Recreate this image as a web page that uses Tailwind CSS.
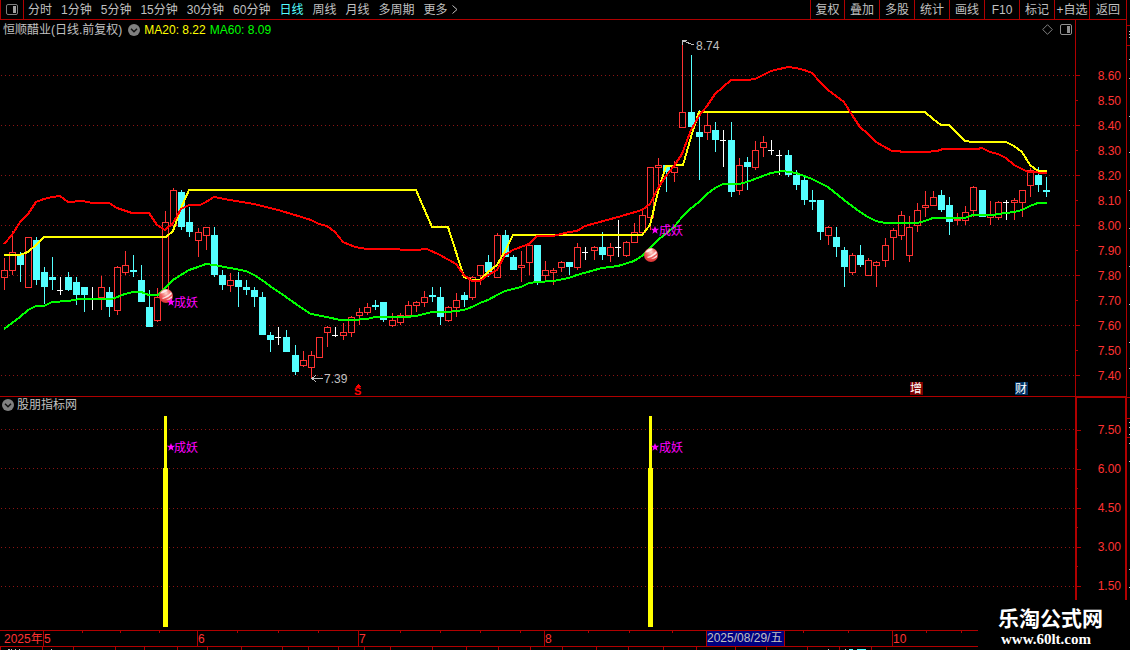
<!DOCTYPE html>
<html lang="zh-CN">
<head>
    <meta charset="UTF-8">
    <meta name="viewport" content="width=device-width, initial-scale=1.0">
    <title>恒顺醋业 日线</title>
    <script src="https://cdn.jsdelivr.net/npm/@tailwindcss/browser@4"></script>
    <style>
        body { font-family: "Liberation Sans", "Noto Sans CJK SC", sans-serif; }
    </style>
</head>
<body class="bg-black text-[#c0c0c0] text-[12px] leading-4 min-h-screen overflow-hidden relative">
    <!-- Toolbar -->
    <header class="flex h-5 border-b border-l border-[#b00000] mr-[3px]">
        <button class="w-[23px] border-r border-[#b00000] flex items-center justify-center" aria-label="面板">
            <svg class="w-[12px] h-[11px] -mt-px" viewBox="0 0 12 11" fill="none"><rect x=".5" y=".5" width="11" height="10" rx="1.5" stroke="#808080"/><rect x="7" y="2" width="3" height="7" fill="#a0a0a0"/></svg>
        </button>
        <nav class="flex gap-[9px] pl-1 whitespace-nowrap">
            <button>分时</button>
            <button>1分钟</button>
            <button>5分钟</button>
            <button>15分钟</button>
            <button>30分钟</button>
            <button>60分钟</button>
            <button class="text-[#54ffff]">日线</button>
            <button>周线</button>
            <button>月线</button>
            <button>多周期</button>
            <button class="flex items-center gap-1">更多<svg class="w-[6px] h-[9px]" viewBox="0 0 6 9" fill="none" stroke="#c0c0c0"><path d="M.5 .5l4.5 4-4.5 4"/></svg></button>
        </nav>
        <div class="ml-auto flex whitespace-nowrap">
            <button class="w-[34px] border-l border-[#b00000]">复权</button>
            <button class="w-[35px] border-l border-[#b00000]">叠加</button>
            <button class="w-[35px] border-l border-[#b00000]">多股</button>
            <button class="w-[35px] border-l border-[#b00000]">统计</button>
            <button class="w-[35px] border-l border-[#b00000]">画线</button>
            <button class="w-[35px] border-l border-[#b00000]">F10</button>
            <button class="w-[35px] border-l border-[#b00000]">标记</button>
            <button class="w-[35px] border-l border-[#b00000]">+自选</button>
            <button class="w-[38px] border-l border-r border-[#b00000]">返回</button>
        </div>
    </header>

    <div class="grid grid-cols-[minmax(0,1fr)_51px_4px]">
        <!-- Candles -->
        <section class="border-b border-[#b00000]">
            <div class="flex items-center h-[19px] pl-[3px] pr-[3px] whitespace-nowrap">
                <h1>恒顺醋业(日线.前复权)</h1>
                <button class="ml-[6px]" aria-label="指标菜单">
                    <svg class="w-3 h-3 block" viewBox="0 0 12 12" fill="none"><circle cx="6" cy="6" r="6" fill="#808080"/><path d="M3 4.8l3 3 3-3" stroke="#111" stroke-width="1.5"/></svg>
                </button>
                <span class="ml-1 text-[#ffff00]">MA20: 8.22</span>
                <span class="ml-1 text-[#00ff00]">MA60: 8.09</span>
                <button class="ml-auto" aria-label="标记"><svg class="w-[11px] h-[11px] block" viewBox="0 0 11 11" fill="none" stroke="#808080"><path d="M5.5 .7l4.8 4.8-4.8 4.8L.7 5.5z"/></svg></button>
                <button class="ml-[7px]" aria-label="侧栏"><svg class="w-[12px] h-[11px] block" viewBox="0 0 12 11" fill="none"><rect x=".5" y=".5" width="11" height="10" rx="1.5" stroke="#909090"/><rect x="7" y="2" width="3" height="7" fill="#909090"/></svg></button>
            </div>
            <svg class="block w-full h-auto" viewBox="0 39 1075 357" shape-rendering="crispEdges" fill="none">
                <g stroke="#8c1414" stroke-dasharray="1 3">
                    <path d="M1 75.5H1075M1 125.5H1075M1 175.5H1075M1 225.5H1075M1 275.5H1075M1 325.5H1075M1 375.5H1075"/>
                </g>
                <g id="candles"></g>
                <polyline id="band" stroke="#ffff00" stroke-width="2"/>
                <polyline id="ma60" stroke="#00ff00" stroke-width="2"/>
                <polyline id="ma20" stroke="#ff0000" stroke-width="2"/>
                <g stroke="#c0c0c0">
                    <path d="M682.5 45V40.5H687M683 41l11 4"/>
                    <path d="M311 378.5H323M316 375l-4 3.5 4 3.5"/>
                </g>
                <g font-size="12" fill="#c0c0c0">
                    <text x="696" y="50">8.74</text>
                    <text x="324" y="383">7.39</text>
                </g>
                <!-- signal marks -->
                <defs>
                    <radialGradient id="ball" cx=".5" cy=".3" r=".7">
                        <stop offset="0" stop-color="#ffd8d0"/>
                        <stop offset=".5" stop-color="#f06060"/>
                        <stop offset="1" stop-color="#d83030"/>
                    </radialGradient>
                    <g id="signal" shape-rendering="auto">
                        <circle r="7" fill="url(#ball)"/>
                        <path d="M-6 -2.500Q-3 -7 2 -6.300Q0 -3 -6 -2.500zM-4 2Q2 0 5-4L6-2Q2 2-3 3zM0 4Q4 2 6 0L6 2Q4 4 0 4z" fill="#fff" fill-opacity=".8"/>
                    </g>
                    <path id="star" d="M0-4L1.100-1.200H4.200L1.700.7L2.600 3.700L0 1.900L-2.600 3.700L-1.700.7L-4.200-1.200H-1.100z" fill="#ff00ff"/>
                </defs>
                <use href="#signal" x="166" y="296"/>
                <use href="#signal" x="651" y="255"/>
                <use href="#star" x="171" y="302" shape-rendering="auto"/>
                <use href="#star" x="655" y="230" shape-rendering="auto"/>
                <g font-size="12" fill="#ff00ff">
                    <text x="174" y="307">成妖</text>
                    <text x="659" y="235">成妖</text>
                </g>
                <path d="M355 387h6l-3-3z" fill="#ff0000"/>
                <text x="354" y="395" font-size="11" font-weight="bold" fill="#ff0000">S</text>
                <rect x="910" y="382" width="13" height="13" fill="#7f0000"/>
                <rect x="1015" y="382" width="13" height="13" fill="#003366"/>
                <g font-size="12" fill="#fff">
                    <text x="910" y="393">增</text>
                    <text x="1015" y="393">财</text>
                </g>
            </svg>
        </section>
        <div class="border-l border-b border-[#b00000] pt-[43px] text-[#ff3232]">
            <div class="flex h-[25px] items-center justify-between pr-[5px]"><i class="w-1 h-px bg-[#b00000]"></i>8.60</div>
            <div class="flex h-[25px] items-center justify-between pr-[5px]"><i class="w-0.5 h-px bg-[#b00000]"></i>8.50</div>
            <div class="flex h-[25px] items-center justify-between pr-[5px]"><i class="w-1 h-px bg-[#b00000]"></i>8.40</div>
            <div class="flex h-[25px] items-center justify-between pr-[5px]"><i class="w-0.5 h-px bg-[#b00000]"></i>8.30</div>
            <div class="flex h-[25px] items-center justify-between pr-[5px]"><i class="w-1 h-px bg-[#b00000]"></i>8.20</div>
            <div class="flex h-[25px] items-center justify-between pr-[5px]"><i class="w-0.5 h-px bg-[#b00000]"></i>8.10</div>
            <div class="flex h-[25px] items-center justify-between pr-[5px]"><i class="w-1 h-px bg-[#b00000]"></i>8.00</div>
            <div class="flex h-[25px] items-center justify-between pr-[5px]"><i class="w-0.5 h-px bg-[#b00000]"></i>7.90</div>
            <div class="flex h-[25px] items-center justify-between pr-[5px]"><i class="w-1 h-px bg-[#b00000]"></i>7.80</div>
            <div class="flex h-[25px] items-center justify-between pr-[5px]"><i class="w-0.5 h-px bg-[#b00000]"></i>7.70</div>
            <div class="flex h-[25px] items-center justify-between pr-[5px]"><i class="w-1 h-px bg-[#b00000]"></i>7.60</div>
            <div class="flex h-[25px] items-center justify-between pr-[5px]"><i class="w-0.5 h-px bg-[#b00000]"></i>7.50</div>
            <div class="flex h-[25px] items-center justify-between pr-[5px]"><i class="w-1 h-px bg-[#b00000]"></i>7.40</div>
        </div>
        <div class="border-l border-[#b00000]">
            <svg class="block w-[3px] h-[376px]" viewBox="0 20 3 376" shape-rendering="crispEdges"><path d="M0 25.500h3M0 45.500h3" stroke="#b00000"/><path d="M2 31.500h1M2 34.500h1M2 37.500h1M2 59.500h1M2 78.500h1M2 116.500h1M2 152.500h1M2 190.500h1M2 228.500h1M2 266.500h1M2 304.500h1M2 342.500h1M2 368.500h1" stroke="#c0c0c0"/></svg>
        </div>

        <!-- Indicator -->
        <section>
            <div class="flex items-center h-4 pl-[2px] gap-[3px]">
                <button aria-label="指标菜单">
                    <svg class="w-3 h-3 block" viewBox="0 0 12 12" fill="none"><circle cx="6" cy="6" r="6" fill="#808080"/><path d="M3 4.800l3 3 3-3" stroke="#111" stroke-width="1.500"/></svg>
                </button>
                <h2>股朋指标网</h2>
            </div>
            <svg class="block w-full h-auto" viewBox="0 413 1075 217" shape-rendering="crispEdges" fill="none">
                <path d="M1 429.500H1075M1 468.500H1075M1 508.500H1075M1 547.500H1075M1 586.500H1075" stroke="#8c1414" stroke-dasharray="1 3"/>
                <path d="M164 416h3v52h1v159h-5V468h1zM649 416h3v52h1v159h-5V468h1z" fill="#ffff00"/>
                <use href="#star" x="171" y="447" shape-rendering="auto"/>
                <use href="#star" x="655" y="447" shape-rendering="auto"/>
                <g font-size="12" fill="#ff00ff">
                    <text x="174" y="452">成妖</text>
                    <text x="659" y="452">成妖</text>
                </g>
            </svg>
        </section>
        <div class="border-l-2 border-t border-r border-[#b00000] pt-[22px] text-[#ff3232]">
            <div class="flex h-5 items-center justify-between pr-1"><i class="w-1 h-px bg-[#b00000]"></i>7.50</div>
            <div class="flex h-[19px] items-center"><i class="w-px h-px bg-[#b00000]"></i></div>
            <div class="flex h-5 items-center justify-between pr-1"><i class="w-1 h-px bg-[#b00000]"></i>6.00</div>
            <div class="flex h-[19px] items-center"><i class="w-px h-px bg-[#b00000]"></i></div>
            <div class="flex h-5 items-center justify-between pr-1"><i class="w-1 h-px bg-[#b00000]"></i>4.50</div>
            <div class="flex h-[19px] items-center"><i class="w-px h-px bg-[#b00000]"></i></div>
            <div class="flex h-5 items-center justify-between pr-1"><i class="w-1 h-px bg-[#b00000]"></i>3.00</div>
            <div class="flex h-[19px] items-center"><i class="w-px h-px bg-[#b00000]"></i></div>
            <div class="flex h-5 items-center justify-between pr-1"><i class="w-1 h-px bg-[#b00000]"></i>1.50</div>
        </div>
        <div class="border-l border-[#b00000]">
            <svg class="block w-[3px] h-[233px]" viewBox="0 397 3 233" shape-rendering="crispEdges"><path d="M0 397.500h3M0 418.500h3M0 437.500h3" stroke="#b00000"/><path d="M2 422.500h1M2 427.500h1M2 434.500h1M2 443.500h1M2 461.500h1M2 569.500h1M2 587.500h1" stroke="#c0c0c0"/></svg>
        </div>

        <!-- Time axis -->
        <svg class="block w-full h-auto" viewBox="0 630 1075 20" shape-rendering="crispEdges" fill="none">
            <path d="M0 630.500H1075M0 646.500H1075" stroke="#b00000"/>
            <path d="M43.500 631v15M197.500 631v15M358.500 631v15M544.500 631v15M892.500 631v15" stroke="#b00000"/>
            <path d="M82.500 631v2M120.500 631v2M159.500 631v2M237.500 631v2M278.500 631v2M318.500 631v2M400.500 631v2M440.500 631v2M480.500 631v2M520.500 631v2M588.500 631v2M629.500 631v2M672.500 631v2M803.500 631v2M848.500 631v2M926.500 631v2M961.500 631v2" stroke="#b00000"/>
            <path d="M.5 647v3M42.500 647v3M73.500 647v3M115.500 647v3M144.500 647v3M177.500 647v3M207.500 647v3M241.500 647v3M282.500 647v3M308.500 647v3M338.500 647v3M364.500 647v3M390.500 647v3M432.500 647v3M466.500 647v3M498.500 647v3M530.500 647v3M562.500 647v3M596.500 647v3M628.500 647v3M663.500 647v3M696.500 647v3M735.500 647v3M766.500 647v3M807.500 647v3M839.500 647v3M871.500 647v3" stroke="#b00000"/>
            <path d="M8 649.500h2M11 649.500h1M15 649.500h1M19 649.500h1M51 649.500h1M828 649.500h1M845 649.500h1" stroke="#c0c0c0"/>
            <path d="M849 649.500h4M857 649.500h9" stroke="#54ffff"/>
            <rect x="706.500" y="630.500" width="78" height="16" fill="#000080" stroke="#b00000"/>
            <g font-size="12" fill="#ff3232">
                <text x="4" y="643">2025年</text>
                <text x="44" y="643">5</text>
                <text x="198" y="643">6</text>
                <text x="359" y="643">7</text>
                <text x="545" y="643">8</text>
                <text x="893" y="643">10</text>
            </g>
            <text x="707" y="642" font-size="12" fill="#c0c0c0">2025/08/29/五</text>
        </svg>
    </div>

    <div class="absolute right-0 bottom-0 w-[152px] h-[50px] bg-black text-white pl-5">
        <p class="text-[21px] leading-[22px] pt-2 font-bold whitespace-nowrap">乐淘公式网</p>
        <p class="pl-[3px] text-[15px] leading-[18px] font-bold font-['Liberation_Serif',serif]"><a href="#">www.60lt.com</a></p>
    </div>

    <script>
        // high, body top, body bottom, low, kind (r = up, c = down, w = flat)
        const bars = `258 270 278 290 r|231 252 271 275 r|252 255 265 282 c|237 237 288 288 r|237 240 280 285 c|267 272 287 304 c|257 277 280 290 c|277 290 291 295 w|272 277 290 291 c|277 282 295 305 c
287 287 295 312 c|287 298 299 310 w|276 287 298 310 r|287 292 307 317 c|266 267 311 315 r|251 265 273 275 r|255 270 272 277 c|265 280 302 302 c|290 307 327 327 c|288 297 321 322 r
211 222 296 296 r|188 190 226 226 r|190 192 227 230 c|207 222 232 237 c|228 232 241 257 r|227 227 236 250 r|227 235 275 277 c|270 275 285 290 c|273 280 286 292 r|272 280 287 307 c
280 287 290 295 c|287 290 297 307 c|292 297 335 335 c|332 335 340 352 c|327 337 338 345 w|330 337 352 352 c|345 355 372 375 c|351 360 366 367 r|351 355 368 379 r|337 337 358 358 r
326 327 333 347 r|327 335 336 337 w|323 332 336 340 r|316 317 333 337 r|308 312 316 325 r|303 307 313 315 r|300 305 307 310 c|302 302 320 322 c|313 320 326 327 r|313 315 323 325 r
301 305 316 316 r|301 302 306 312 r|291 297 303 307 r|287 295 297 302 c|287 297 317 325 c|306 307 321 322 r|293 300 308 317 r|292 295 300 307 c|276 277 298 300 r|265 265 276 285 r
255 262 272 277 c|233 235 278 278 r|230 235 257 257 c|255 257 270 270 c|251 265 268 282 r|245 245 263 275 r|245 245 282 285 c|261 270 276 280 r|268 270 273 285 r|261 262 268 272 r
262 262 267 275 c|243 247 268 270 r|247 252 253 260 w|246 247 251 260 r|232 247 255 260 c|243 247 256 262 r|220 247 248 257 w|241 242 256 257 r|223 232 243 243 r|210 215 233 235 r
167 167 218 230 r|158 165 168 187 r|165 165 172 192 c|161 167 173 182 r|41 112 128 128 r|55 112 127 127 c|110 132 137 180 c|112 125 133 140 r|122 130 140 152 c|130 140 141 167 w
122 140 192 197 c|158 165 191 195 r|157 162 167 190 c|141 150 168 170 r|136 142 148 157 r|140 150 151 155 w|150 155 156 175 w|150 155 175 177 c|170 175 185 190 c|176 180 200 205 c
190 200 202 210 c|200 200 232 240 c|226 227 236 245 r|227 237 247 257 c|247 250 267 287 c|253 255 273 275 r|245 255 265 267 c|258 260 276 276 r|261 262 266 287 r|238 245 261 267 r
228 230 238 260 r|211 215 236 240 r|216 227 256 262 r|203 210 226 232 r|191 205 208 217 r|191 197 206 206 r|190 195 210 212 c|197 205 222 235 c|213 219 221 225 r|206 212 221 225 r
186 187 211 217 r|190 190 217 217 c|201 215 218 225 r|201 202 218 220 r|200 202 203 220 w|198 200 203 220 r|190 190 203 217 r|168 170 186 197 r|167 175 185 192 c|177 190 192 197 c`;

        const colors = { r: '#ff3232', c: '#54ffff', w: '#ffffff' };
        const step = 8.0829;
        document.getElementById('candles').innerHTML = bars.split(/[|\n]/).map((row, i) => {
            const [hi, top, bot, lo, kind] = row.trim().split(' ');
            const x = Math.floor(4.022 + i * step);
            const color = colors[kind];
            const h = bot - top;
            if (kind === 'r') {
                return `<path d="M${x + .5} ${hi}V${top}M${x + .5} ${bot}V${lo}" stroke="${color}"/>` +
                    `<rect x="${x - 2.5}" y="${+top + .5}" width="6" height="${h - 1}" stroke="${color}"/>`;
            }
            return `<rect x="${x}" y="${hi}" width="1" height="${lo - hi}" fill="${color}"/>` +
                `<rect x="${x - 3}" y="${top}" width="${kind === 'w' ? 6 : 7}" height="${h}" fill="${color}"/>`;
        }).join('');

        const lines = {
            band: '4,255 20,255 28,252 36,245 44,237 166,237 173,231 181,208 189,190 416,190 432,227 448,227 456,252 464,277 472,280 480,280 488,272 497,265 505,251 513,235 642,235 650,225 658,192 666,166 683,165 691,137 699,112 925,112 933,119 941,125 949,125 957,133 965,141 973,142 1006,142 1014,146 1022,152 1030,165 1038,171 1047,171',
            ma20: '4,244 12,235 20,222 28,214 36,202 44,199 52,197 60,196 68,202 83,201 92,203 109,203 117,208 132,213 149,213 157,225 165,230 173,223 181,209 189,205 200,205 206,202 214,197 230,200 254,204 278,210 295,215 311,220 319,224 327,226 335,232 343,242 355,247 367,249 397,249 403,250 416,250 427,249 440,255 456,264 464,275 472,281 480,281 488,275 497,270 505,255 513,250 529,244 537,236 553,236 569,232 577,231 585,226 618,217 642,210 650,204 658,188 666,176 674,166 682,154 691,130 699,116 707,106 715,94 723,87 731,80 747,80 755,79 771,71 788,67 796,68 804,70 812,73 820,82 828,90 836,96 844,102 852,115 860,127 868,134 876,142 892,151 909,152 925,152 937,151 943,149 977,149 982,148 990,152 998,154 1006,158 1014,165 1022,169 1028,172 1047,173',
            ma60: '4,329 12,323 20,317 28,310 36,306 44,306 52,302 68,301 80,299 112,299 125,294 133,292 141,292 149,295 158,295 165,288 173,280 181,275 189,270 198,267 206,264 214,265 230,268 246,271 254,275 262,280 270,286 286,297 303,309 311,314 327,317 340,320 351,320 367,319 375,317 405,317 416,316 432,312 448,312 464,310 472,307 480,303 488,300 497,295 505,291 521,287 529,283 537,282 553,281 569,278 577,275 602,268 618,266 634,261 642,256 650,248 658,240 674,227 682,217 690,209 699,202 707,194 715,188 723,184 739,184 747,182 755,179 771,173 783,171 796,173 804,176 812,179 828,187 844,200 852,206 860,212 868,217 876,221 885,223 917,223 925,221 933,218 965,218 973,215 993,215 998,214 1014,212 1022,210 1030,206 1038,203 1047,203'
        };
        for (const id in lines) document.getElementById(id).setAttribute('points', lines[id]);
    </script>
</body>
</html>
